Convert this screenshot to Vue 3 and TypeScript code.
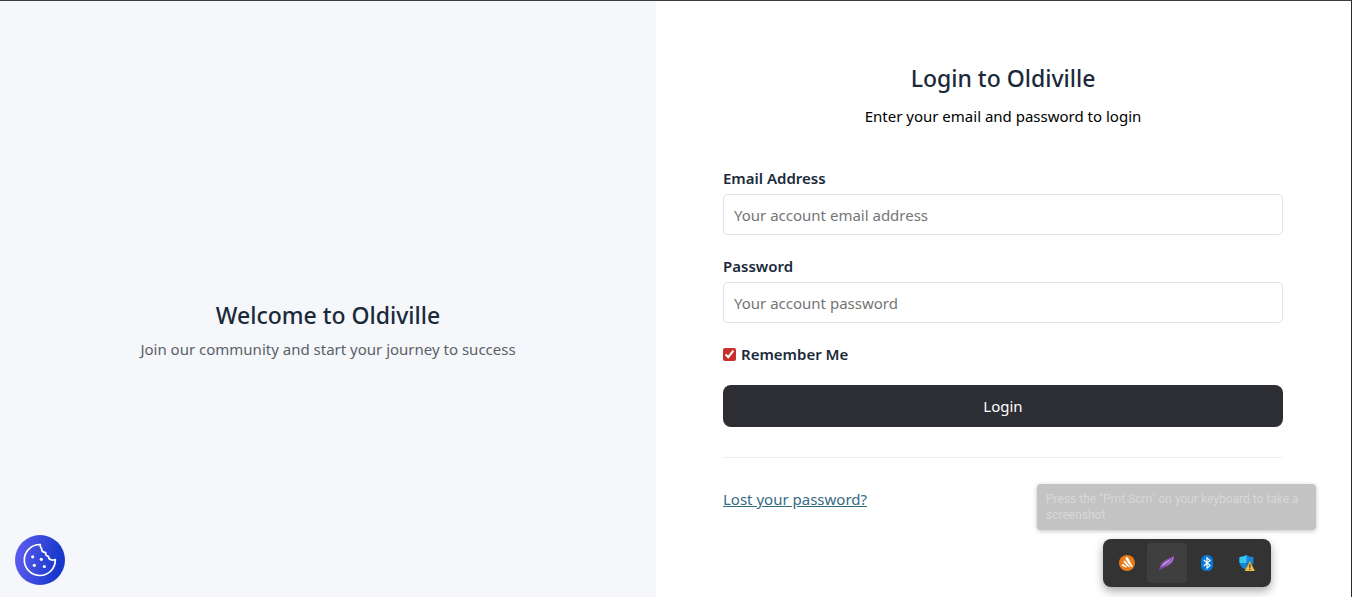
<script setup lang="ts">
import { ref } from 'vue'

const email = ref<string>('')
const password = ref<string>('')
const remember = ref<boolean>(true)
</script>

<template>
  <div class="page">
    <section class="welcome">
      <h2 class="title">Welcome to Oldiville</h2>
      <p class="lead">Join our community and start your journey to success</p>
    </section>

    <main class="panel">
      <form class="login" @submit.prevent>
        <header class="intro">
          <h1 class="title">Login to Oldiville</h1>
          <p class="subtitle">Enter your email and password to login</p>
        </header>

        <div class="field">
          <label for="email">Email Address</label>
          <input id="email" v-model="email" type="email" placeholder="Your account email address" />
        </div>
        <div class="field">
          <label for="password">Password</label>
          <input id="password" v-model="password" type="password" placeholder="Your account password" />
        </div>

        <div class="remember">
          <input id="remember" v-model="remember" type="checkbox" />
          <label for="remember">Remember Me</label>
        </div>

        <button class="submit" type="submit">Login</button>

        <div class="foot">
          <a href="#">Lost your password?</a>
        </div>
      </form>
    </main>

    <button class="cookie" type="button" aria-label="Cookie settings">
      <svg viewBox="0 0 50 50" width="50" height="50" fill="none" stroke="#fff" stroke-width="1.700" stroke-linejoin="round" stroke-linecap="round">
        <path d="M25.300 9.500A15.500 15.500 0 1 0 40.300 24.500C39 25.200 37.500 25.500 36 24.800C34.200 24.200 33.300 23 33.500 21.300C31.500 21.300 30.400 20 30.700 17.600C28 17.300 26.400 15.800 26.600 13.500C25.500 12.700 25 11 25.300 9.500Z" />
        <g fill="#fff" stroke="none">
          <circle cx="17.700" cy="21.800" r="1.600" />
          <circle cx="26.300" cy="24.300" r="1.600" />
          <circle cx="19.300" cy="30.300" r="1.600" />
          <circle cx="29.300" cy="31.500" r="1.600" />
        </g>
      </svg>
    </button>

    <div class="hint" role="tooltip">Press the "Prnt Scrn" on your keyboard to take a screenshot</div>

    <div class="tray">
      <button type="button" aria-label="Antivirus">
        <svg viewBox="0 0 16 16" width="16" height="16">
          <circle cx="8" cy="8" r="8" fill="#e57a17" />
          <path d="M6.800 2.400Q8 1.500 9 2.800L13.600 11.200Q13.800 12.700 12.500 12.200Q9 9 6.600 4.100Q6.100 3 6.800 2.400Z" fill="#fff" />
          <path d="M4.700 6.100Q5.300 5 6.200 6L11 11.700Q11.200 12.500 10.200 12.200Q6.800 10.400 4.800 7.300Q4.300 6.700 4.700 6.100Z" fill="#fff" />
          <path d="M2.900 9.600Q3.400 8.700 4.300 9.200L8.200 11.800Q8.300 12.500 7.400 12.400Q5 12.200 3.100 10.700Q2.600 10.200 2.900 9.600Z" fill="#fff" />
        </svg>
      </button>
      <button type="button" class="active" aria-label="Screenshot tool">
        <svg viewBox="0 0 16 16" width="16" height="16">
          <path d="M.500 15.500C.500 9.800 3.500 6.300 8 4.200C11 2.800 13.500 2 15 .500C15.500 3.500 14.500 6.500 12 8.700C9 11.500 4.500 11.700 .500 15.500Z" fill="#8e4fb8" />
          <path d="M2.300 12.500C3.200 8.800 6 7 9 5.400C11 4.300 13 3.500 14 2.700C13.500 5.500 12 6.700 10 8.200C7.300 10.200 4.500 10.500 2.300 12.500Z" fill="#c9a0e4" />
          <path d="M1 15C4 10.500 9 8.300 13 4" fill="none" stroke="#68358f" stroke-width="1" />
        </svg>
      </button>
      <button type="button" aria-label="Bluetooth">
        <svg viewBox="0 0 16 16" width="16" height="16">
          <rect x="2" width="12" height="16" rx="5.500" fill="#0878d8" />
          <path d="M4.800 5L11 10.600L8 13.200V2.800L11 5.400L4.800 11" fill="none" stroke="#fff" stroke-width="1.200" />
        </svg>
      </button>
      <button type="button" aria-label="Security warning">
        <svg viewBox="0 0 16 16" width="16" height="16">
          <path d="M7.500 0Q10 2 14.500 2V7Q14.500 12 7.500 15Q.500 12 .500 7V2Q5 2 7.500 0Z" fill="#1689d4" />
          <path d="M7.500 0V8H.500V2Q5 2 7.500 0Z" fill="#39c6f2" />
          <path d="M7.500 8H14.400Q13.500 12.400 7.500 15Z" fill="#1565b0" />
          <path d="M10.800 6.500L15.700 16H6Z" fill="#f6c34a" stroke="#e0a52d" stroke-width="0.500" stroke-linejoin="round" />
          <path d="M10.800 9.300V12.700M10.800 13.800V15" stroke="#282828" stroke-width="1.200" />
        </svg>
      </button>
    </div>
  </div>
</template>

<style>
body {
  margin: 0;
}
</style>

<style scoped>
* {
  box-sizing: border-box;
}
.page {
  position: relative;
  display: grid;
  grid-template-columns: 656fr 695fr;
  min-height: 100vh;
  overflow: hidden;
  border-top: 1px solid #3b3b3d;
  border-right: 1px solid #2b2b2d;
  background: #fff;
  color: #000;
  font-family: "Segoe UI", "Noto Sans", "Open Sans", sans-serif;
  font-size: 15px;
  line-height: 24px;
}
.welcome {
  display: flex;
  flex-direction: column;
  align-items: center;
  justify-content: center;
  padding: 61px 24px 0;
  background: #f5f7fb;
  text-align: center;
}
.title {
  margin: 0;
  color: #1b2a3a;
  font-size: 23px;
  font-weight: 500;
  line-height: 32px;
}
.lead {
  margin: 6px 0 0;
  color: #5b6168;
}
.panel {
  padding: 61px 25px 32px 24px;
}
.login {
  max-width: 560px;
  margin: 0 auto;
}
.intro {
  margin-bottom: 38px;
  text-align: center;
}
.subtitle {
  margin: 10px 0 0;
}
label {
  color: #1b2a3a;
  font-weight: 600;
}
.field {
  display: flex;
  flex-direction: column;
  gap: 4px;
  margin-bottom: 19px;
}
.field input {
  width: 100%;
  height: 41px;
  padding: 0 10px;
  border: 1px solid #e1e3e6;
  border-radius: 4px;
  background: #fff;
  color: #1b2a3a;
  font: inherit;
}
.field input::placeholder {
  color: #757575;
}
.remember {
  display: flex;
  align-items: center;
  gap: 5px;
  margin-bottom: 19px;
}
.remember input {
  width: 13px;
  height: 13px;
  margin: 0;
  accent-color: #c9302c;
}
.submit {
  width: 100%;
  height: 42px;
  border: 0;
  border-radius: 8px;
  background: #2c2e33;
  color: #fff;
  font: inherit;
}
.foot {
  margin-top: 30px;
  padding-top: 29px;
  border-top: 1px solid #eceded;
}
.foot a {
  color: #356b85;
}
.cookie {
  position: absolute;
  left: 15px;
  bottom: 12px;
  width: 50px;
  height: 50px;
  padding: 0;
  border: 0;
  border-radius: 50%;
  background: linear-gradient(100deg, #625ff2, #1638cb 85%);
}
.cookie svg,
.tray svg {
  display: block;
}
.hint {
  position: absolute;
  right: 35px;
  bottom: 67px;
  width: 279px;
  padding: 7px 9px;
  border-radius: 4px;
  background: #c3c3c3;
  box-shadow: 0 1px 4px rgba(0, 0, 0, 0.25);
  color: #d8d8d8;
  font-family: "Segoe UI", Roboto, "Noto Sans", sans-serif;
  font-size: 12px;
  line-height: 16px;
}
.tray {
  position: absolute;
  right: 80px;
  bottom: 10px;
  display: flex;
  padding: 4px;
  border-radius: 8px;
  background: #333;
  box-shadow: 0 4px 10px rgba(0, 0, 0, 0.35);
}
.tray button {
  display: grid;
  place-items: center;
  width: 40px;
  height: 40px;
  padding: 0;
  border: 0;
  border-radius: 4px;
  background: transparent;
}
.tray .active {
  background: #3f3f3f;
}
</style>
